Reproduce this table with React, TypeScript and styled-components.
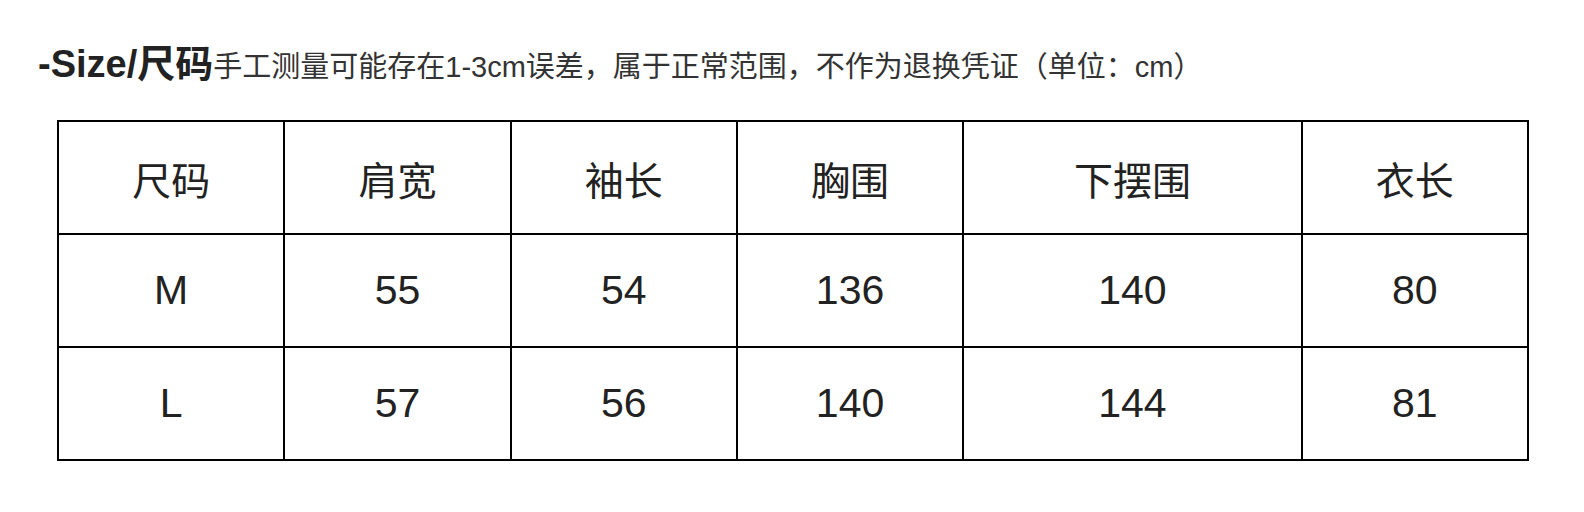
import styled, { createGlobalStyle } from 'styled-components';

const GlobalStyle = createGlobalStyle`
  html, body {
    margin: 0;
    padding: 0;
    background: #ffffff;
  }
  body {
    font-family: "Liberation Sans", "Noto Sans CJK SC", sans-serif;
    color: #222222;
  }
`;

const Page = styled.div`
  width: 1584px;
  height: 512px;
  box-sizing: border-box;
  padding: 44px 0 0 38px;
`;

const Heading = styled.div`
  display: flex;
  align-items: baseline;
  height: 40px;
  line-height: 40px;
`;

const Title = styled.span`
  font-size: 38px;
  font-weight: 700;
  color: #222222;
`;

const Note = styled.span`
  font-size: 29px;
  color: #333333;
`;

const Table = styled.div`
  margin: 36px 0 0 19px;
  width: 1472px;
  box-sizing: border-box;
  display: grid;
  grid-template-columns: 1fr 1fr 1fr 1fr 1.5fr 1fr;
  grid-auto-rows: 111px;
  gap: 2px;
  padding: 2px;
  background: #000000;
`;

const Cell = styled.div<{ $head?: boolean }>`
  background: #ffffff;
  display: flex;
  align-items: center;
  justify-content: center;
  font-size: ${({ $head }) => ($head ? '39px' : '41px')};
  color: #222222;
`;

const headers = ['尺码', '肩宽', '袖长', '胸围', '下摆围', '衣长'];

const rows = [
  ['M', '55', '54', '136', '140', '80'],
  ['L', '57', '56', '140', '144', '81'],
];

export default function App() {
  return (
    <>
      <GlobalStyle />
      <Page>
        <Heading>
          <Title>-Size/尺码</Title>
          <Note>手工测量可能存在1-3cm误差，属于正常范围，不作为退换凭证（单位：cm）</Note>
        </Heading>
        <Table>
          {headers.map((h) => (
            <Cell key={h} $head>
              {h}
            </Cell>
          ))}
          {rows.map((row) =>
            row.map((v, i) => <Cell key={row[0] + i}>{v}</Cell>)
          )}
        </Table>
      </Page>
    </>
  );
}
